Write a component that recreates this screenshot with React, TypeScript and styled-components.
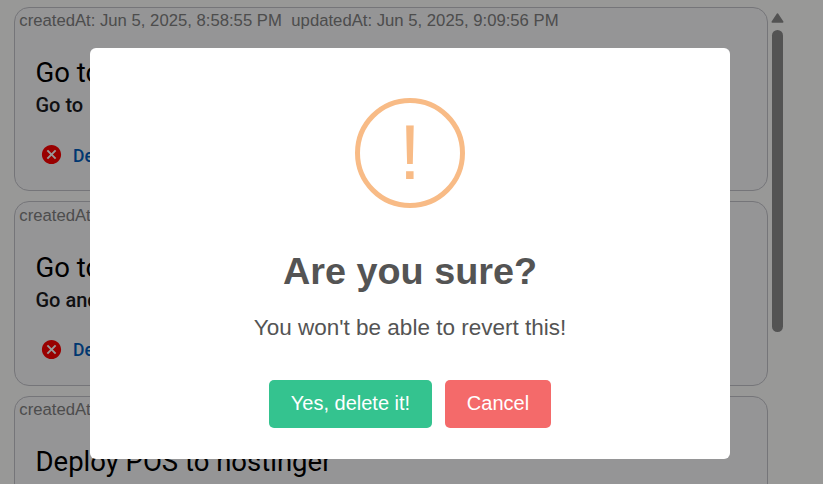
import React from "react";
import styled, { createGlobalStyle } from "styled-components";

const GlobalStyle = createGlobalStyle`
  * { box-sizing: border-box; }
  body { margin: 0; overflow: hidden; background: #fdfdfc; }
`;

const Page = styled.main`
  display: flex;
  height: 484px;
  padding: 7px 0 0 14px;
  overflow: hidden;
`;

const List = styled.section`
  display: flex;
  flex-direction: column;
  gap: 10px;
  width: 754px;
`;

const Card = styled.article`
  flex: none;
  height: 184.4px;
  border: 1px solid #c4c4ca;
  border-radius: 15px;
  background: #f8f8fb;
`;

const Meta = styled.div`
  display: flex;
  gap: 9.5px;
  height: 25px;
  padding: 1.2px 0 0 4.3px;
  font: 16.7px/24px "Liberation Sans", Arial, sans-serif;
  color: #808080;
  white-space: nowrap;
`;

const Content = styled.div`
  padding: 20.2px 20.5px 0;
  font-family: Roboto, sans-serif;
`;

const CardTitle = styled.h2`
  margin: 0;
  font-size: 27.5px;
  font-weight: 400;
  line-height: 40px;
  color: #000;
`;

const Subtitle = styled.div`
  font-size: 20px;
  font-weight: 500;
  line-height: 24px;
  color: #1b1b1f;
`;

const CardAction = styled.button`
  display: flex;
  align-items: center;
  gap: 10px;
  height: 40px;
  margin-top: 18.6px;
  padding: 0 4.5px;
  border: 0;
  background: none;
  color: #005cbb;
  font: 500 17.5px/40px Roboto, sans-serif;

  svg {
    margin-bottom: 2px;
  }
`;

const Scrollbar = styled.aside`
  display: flex;
  flex-direction: column;
  align-items: center;
  gap: 7px;
  width: 13px;
  margin-left: 3px;
  padding-top: 6px;
`;

const Thumb = styled.div`
  width: 11px;
  height: 302px;
  border-radius: 6px;
  background: #8b8b8b;
`;

const Backdrop = styled.div`
  position: fixed;
  inset: 0;
  display: flex;
  justify-content: center;
  align-items: flex-start;
  padding: 48px 3px 0 0;
  background: rgba(0, 0, 0, 0.4);
`;

const Dialog = styled.div`
  display: flex;
  flex-direction: column;
  align-items: center;
  width: 640px;
  height: 411px;
  padding-top: 50px;
  border-radius: 6px;
  background: #fff;
  color: #545454;
  font-family: "Liberation Sans", Arial, sans-serif;
`;

const WarningIcon = styled.div`
  display: flex;
  align-items: center;
  justify-content: center;
  width: 110px;
  height: 110px;
  padding-bottom: 2px;
  border: 5px solid #f8bb86;
  border-radius: 50%;
  color: #f8bb86;
  font-size: 78.5px;
  line-height: 98px;
`;

const DialogTitle = styled.h2`
  margin: 41px 0 0;
  font-size: 37.8px;
  font-weight: 600;
  line-height: 44px;
`;

const DialogText = styled.p`
  margin: 20px 0 0;
  font-size: 22.5px;
  line-height: 30px;
`;

const Actions = styled.div`
  display: flex;
  gap: 13px;
  margin-top: 37px;
`;

const ActionButton = styled.button<{ $color: string; $width: number }>`
  width: ${(p) => p.$width}px;
  height: 48px;
  padding: 0 0 2px;
  border: 0;
  border-radius: 5px;
  background: ${(p) => p.$color};
  color: #fff;
  font: 20px "Liberation Sans", Arial, sans-serif;
`;

const CancelIcon = () => (
  <svg width="23" height="23" viewBox="0 0 24 24" fill="#f00">
    <circle cx="12" cy="12" r="8" fill="#fff" />
    <path d="M12 2C6.47 2 2 6.47 2 12s4.47 10 10 10 10-4.47 10-10S17.53 2 12 2zm5 13.59L15.59 17 12 13.41 8.41 17 7 15.59 10.59 12 7 8.41 8.41 7 12 10.59 15.59 7 17 8.41 13.41 12 17 15.59z" />
  </svg>
);

const tasks = [
  {
    title: "Go to",
    subtitle: "Go to",
    created: "Jun 5, 2025, 8:58:55 PM",
    updated: "Jun 5, 2025, 9:09:56 PM",
  },
  { title: "Go to", subtitle: "Go and", created: "", updated: "" },
  { title: "Deploy POS to hostinger", subtitle: "", created: "", updated: "" },
];

export default function App() {
  return (
    <>
      <GlobalStyle />
      <Page>
        <List>
          {tasks.map((task, i) => (
            <Card key={i}>
              <Meta>
                <span>createdAt: {task.created}</span>
                {task.updated && <span>updatedAt: {task.updated}</span>}
              </Meta>
              <Content>
                <CardTitle>{task.title}</CardTitle>
                {task.subtitle && (
                  <>
                    <Subtitle>{task.subtitle}</Subtitle>
                    <CardAction>
                      <CancelIcon />
                      Delete
                    </CardAction>
                  </>
                )}
              </Content>
            </Card>
          ))}
        </List>
        <Scrollbar>
          <svg width="13" height="10" viewBox="0 0 13 10">
            <path d="M6.5 1 11.8 9H1.2Z" fill="#8b8b8b" stroke="#8b8b8b" strokeWidth="1.4" strokeLinejoin="round" />
          </svg>
          <Thumb />
        </Scrollbar>
      </Page>
      <Backdrop>
        <Dialog role="dialog">
          <WarningIcon>!</WarningIcon>
          <DialogTitle>Are you sure?</DialogTitle>
          <DialogText>You won't be able to revert this!</DialogText>
          <Actions>
            <ActionButton $color="#34c38f" $width={163}>Yes, delete it!</ActionButton>
            <ActionButton $color="#f46a6a" $width={106}>Cancel</ActionButton>
          </Actions>
        </Dialog>
      </Backdrop>
    </>
  );
}
